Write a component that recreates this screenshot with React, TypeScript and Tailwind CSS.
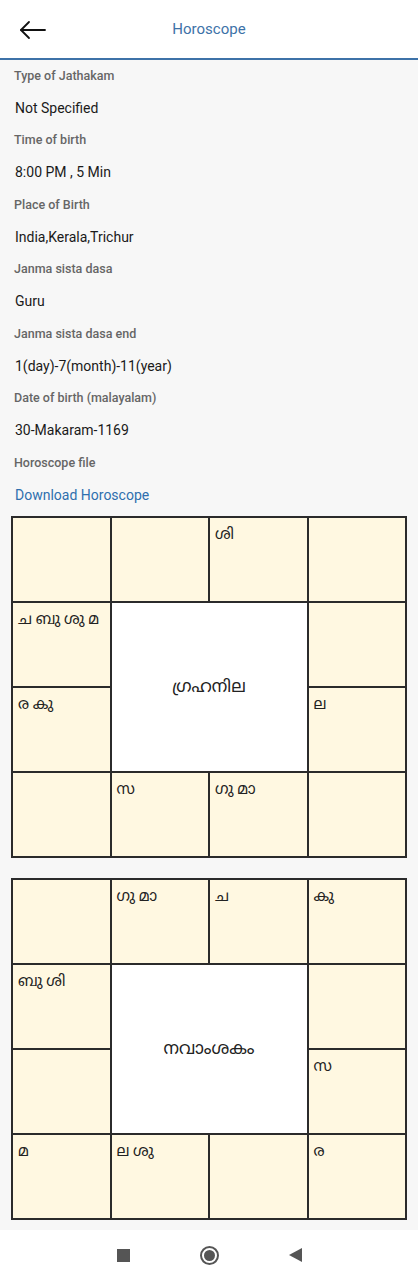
import { ReactNode } from 'react'

const fields = [
  { label: 'Type of Jathakam', value: 'Not Specified' },
  { label: 'Time of birth', value: '8:00 PM , 5 Min' },
  { label: 'Place of Birth', value: 'India,Kerala,Trichur' },
  { label: 'Janma sista dasa', value: 'Guru' },
  { label: 'Janma sista dasa end', value: '1(day)-7(month)-11(year)' },
  { label: 'Date of birth (malayalam)', value: '30-Makaram-1169' },
]

// 12 outer houses laid out around the 2x2 centre box
interface ChartProps {
  title: string
  top: string[]
  left: string[]
  right: string[]
  bottom: string[]
}

function Cell({ children }: { children?: ReactNode }) {
  return (
    <div className="bg-[#fff8e1] px-[5px] pt-[5px] text-[15px] leading-[22px] text-[#222]">
      {children}
    </div>
  )
}

function Chart({ title, top, left, right, bottom }: ChartProps) {
  return (
    <div className="mx-[11px] grid grid-cols-4 grid-rows-[repeat(4,83px)] gap-[2px] border-2 border-[#2b2b2b] bg-[#2b2b2b]">
      {top.map((t, i) => (
        <Cell key={'t' + i}>{t}</Cell>
      ))}
      <Cell>{left[0]}</Cell>
      <div className="col-span-2 row-span-2 flex items-center justify-center bg-white text-[17px] text-[#222]">
        {title}
      </div>
      <Cell>{right[0]}</Cell>
      <Cell>{left[1]}</Cell>
      <Cell>{right[1]}</Cell>
      {bottom.map((t, i) => (
        <Cell key={'b' + i}>{t}</Cell>
      ))}
    </div>
  )
}

export default function App() {
  return (
    <div
      className="flex min-h-[1280px] w-full flex-col bg-[#f7f7f7]"
      style={{ fontFamily: 'Roboto, "Noto Sans Malayalam", "Noto Sans", sans-serif' }}
    >
      <header className="relative flex h-[60px] items-center justify-center border-b-2 border-[#3d72a8] bg-white">
        <button className="absolute left-[18px] top-[19px] p-0" aria-label="Back">
          <svg width="28" height="22" viewBox="0 0 28 22" fill="none" stroke="#111" strokeWidth="1.8" strokeLinecap="round" strokeLinejoin="round">
            <path d="M3 11h24" />
            <path d="M11 3L3 11l8 8" />
          </svg>
        </button>
        <h1 className="text-[15px] text-[#3d72a8]">Horoscope</h1>
      </header>

      <div className="px-[14px]">
        {fields.map(f => (
          <div key={f.label}>
            <div className="flex h-[32.25px] items-center text-[12.5px] font-medium text-[#666]">{f.label}</div>
            <div className="flex h-[32.25px] items-center pl-[1px] text-[14px] text-[#1a1a1a]">{f.value}</div>
          </div>
        ))}
        <div className="flex h-[32.25px] items-center text-[12.5px] font-medium text-[#666]">Horoscope file</div>
        <div className="flex h-[32.25px] items-center pl-[1px] text-[14px] text-[#2f6fae]">Download Horoscope</div>
      </div>

      <div className="mt-[4.5px] flex flex-col gap-[20px]">
        <Chart
          title="ഗ്രഹനില"
          top={['', '', 'ശി', '']}
          left={['ച ബു ശു മ', 'ര കു']}
          right={['', 'ല']}
          bottom={['', 'സ', 'ഗു മാ', '']}
        />
        <Chart
          title="നവാംശകം"
          top={['', 'ഗു മാ', 'ച', 'കു']}
          left={['ബു ശി', '']}
          right={['', 'സ']}
          bottom={['മ', 'ല ശു', '', 'ര']}
        />
      </div>

      <div className="flex-1" />

      <nav className="flex h-[50px] items-center justify-center gap-[70px] bg-white">
        <div className="h-[13px] w-[13px] bg-[#555]" />
        <div className="flex h-[19px] w-[19px] items-center justify-center rounded-full border-2 border-[#555]">
          <div className="h-[11px] w-[11px] rounded-full bg-[#555]" />
        </div>
        <svg width="13" height="14" viewBox="0 0 13 14">
          <path d="M0 7L13 0v14z" fill="#555" />
        </svg>
      </nav>
    </div>
  )
}
